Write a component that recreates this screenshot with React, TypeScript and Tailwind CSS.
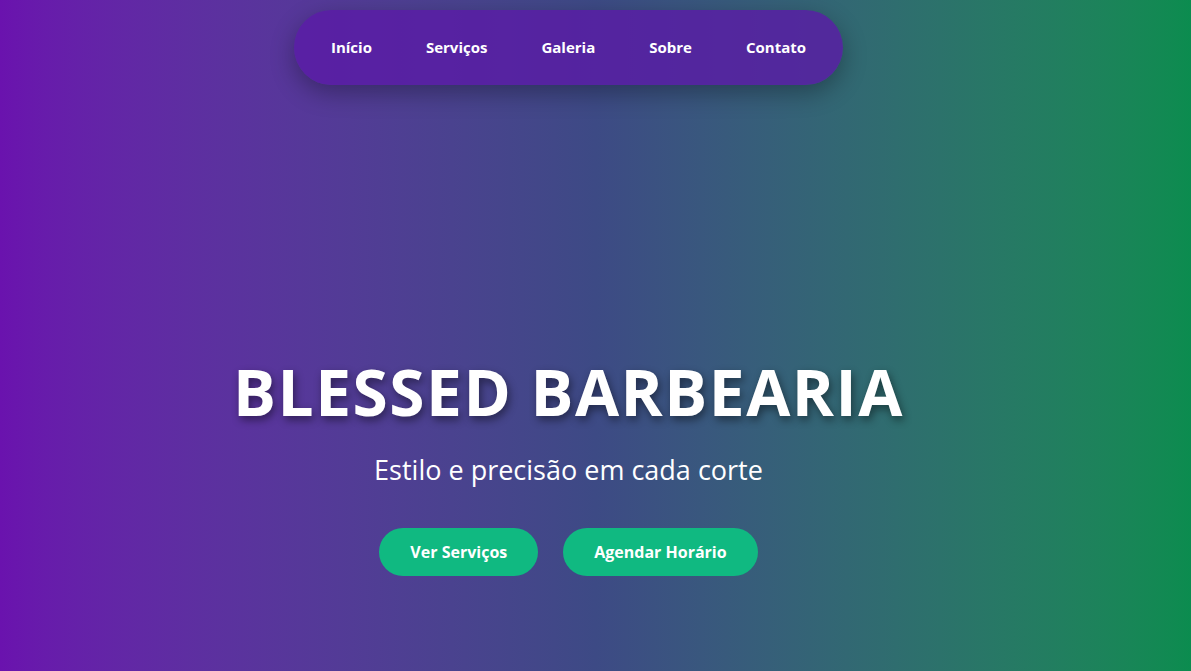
export default function App() {
  const links = ["Início", "Serviços", "Galeria", "Sobre", "Contato"];
  return (
    <div
      className="h-[671px] w-full overflow-hidden bg-gradient-to-r from-[#6a12ae] via-[#3d4a85] to-[#0b8c4f] text-white"
      style={{ fontFamily: '"Open Sans", "Noto Sans", sans-serif' }}
    >
      <div className="flex w-[1137px] flex-col items-center">
        <nav className="mt-[10px] flex h-[75px] items-center rounded-full bg-[#5a1aa6]/80 px-[10px] shadow-[0_8px_24px_rgba(0,0,0,0.3)]">
          {links.map((l) => (
            <a key={l} className="px-[27px] text-[15px] font-bold">
              {l}
            </a>
          ))}
        </nav>

        <main className="mt-[275px] flex flex-col items-center">
          <h1 className="text-[64px] font-bold leading-none tracking-[1.5px] [text-shadow:2px_4px_8px_rgba(0,0,0,0.45)]">
            BLESSED BARBEARIA
          </h1>
          <p className="mt-[32px] text-[27px] leading-none">Estilo e precisão em cada corte</p>
          <div className="mt-[45px] flex gap-[25px]">
            <button className="h-12 rounded-full bg-[#10b981] px-[31px] text-base font-bold">
              Ver Serviços
            </button>
            <button className="h-12 rounded-full bg-[#10b981] px-[31px] text-base font-bold">
              Agendar Horário
            </button>
          </div>
        </main>
      </div>
    </div>
  );
}
